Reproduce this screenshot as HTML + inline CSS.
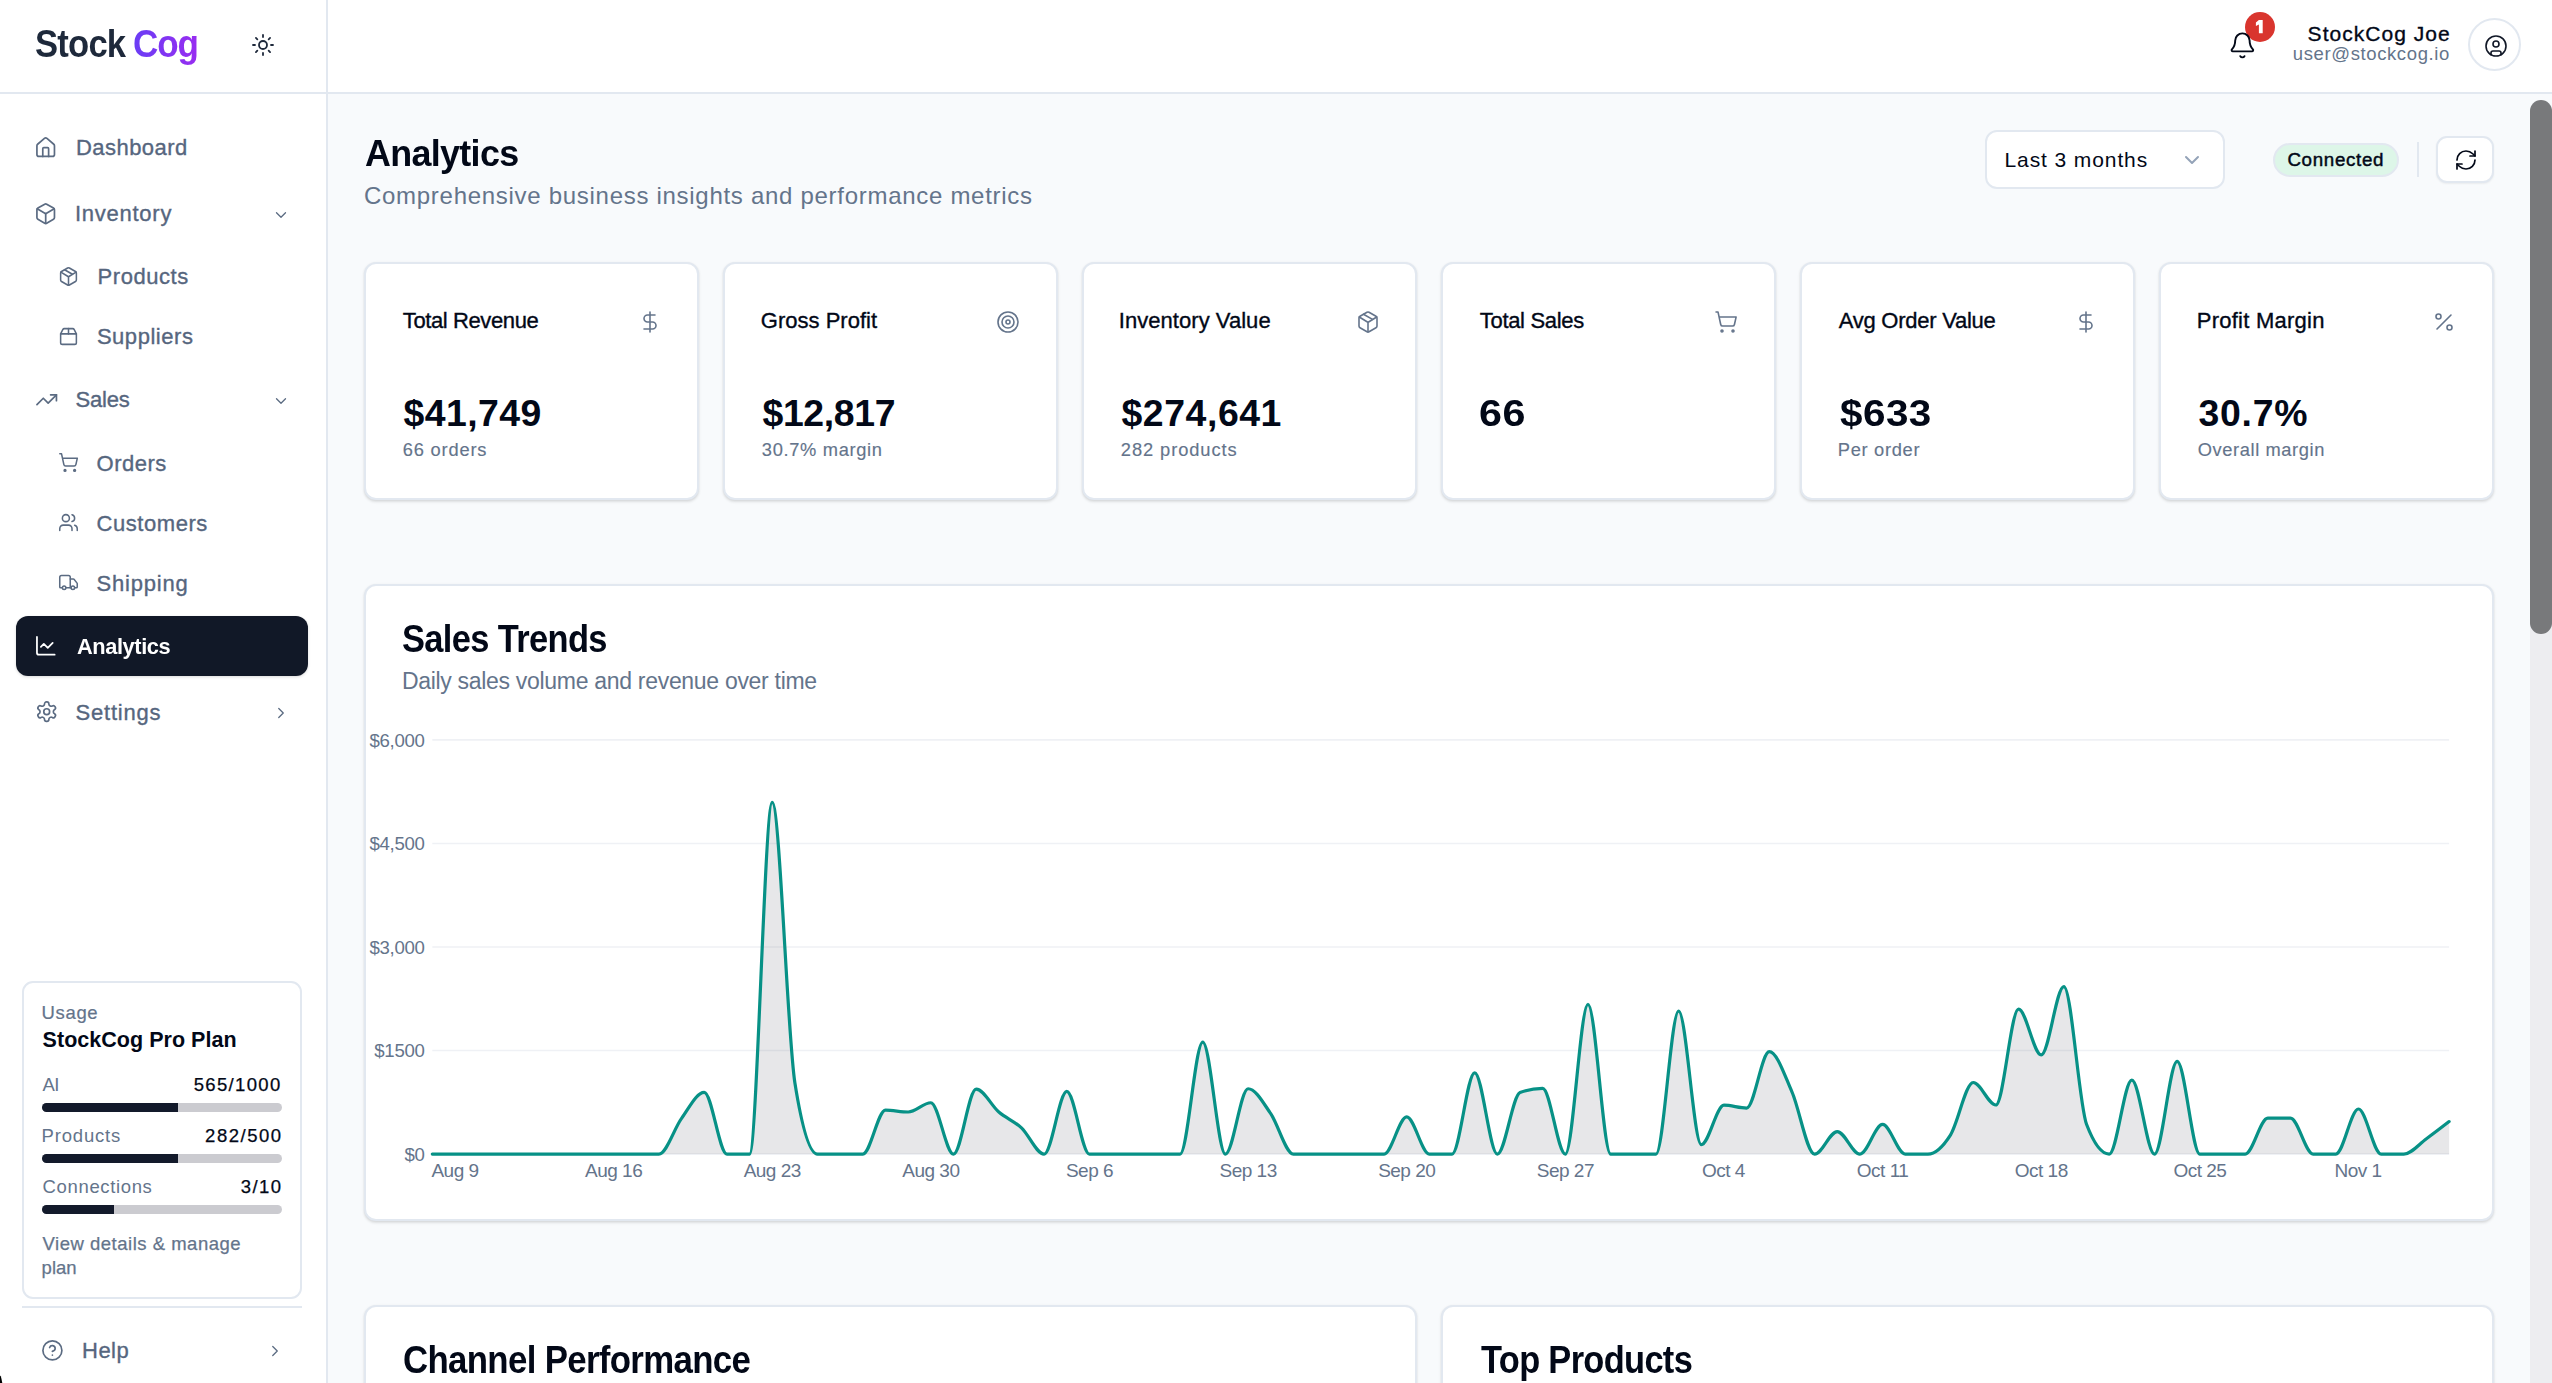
<!DOCTYPE html>
<html><head><meta charset="utf-8"><title>StockCog Analytics</title>
<style>
*{box-sizing:border-box;margin:0;padding:0}
html,body{width:2552px;height:1383px;overflow:hidden;background:#f8fafc;font-family:"Liberation Sans",sans-serif}
.t{position:absolute;white-space:nowrap}
.ic{position:absolute;overflow:visible}
.abs{position:absolute}
.card{position:absolute;background:#fff;border:2px solid #e2e8f0;border-radius:12px;box-shadow:0 1.5px 3px rgba(0,0,0,0.10),0 1px 2px rgba(0,0,0,0.05)}
.bar{position:absolute;left:42px;width:240px;height:9px;border-radius:5px;background:#cbcbd0;overflow:hidden}
.bar i{position:absolute;left:0;top:0;bottom:0;background:#131a2b}
</style></head><body>
<div class="abs" style="left:0;top:0;width:326px;height:1383px;background:#fff"></div>
<div class="abs" style="left:326px;top:0;width:2px;height:1383px;background:#e2e8f0"></div>
<div class="abs" style="left:328px;top:0;width:2224px;height:92px;background:#fff"></div>
<div class="abs" style="left:0;top:92px;width:2552px;height:2px;background:#e2e8f0"></div>
<div class="abs" style="left:16px;top:616px;width:292px;height:60px;border-radius:12px;background:#111827;box-shadow:0 1px 3px rgba(0,0,0,0.15)"></div>
<div class="abs" style="left:22px;top:981px;width:280px;height:318px;border:2px solid #e2e8f0;border-radius:11px;background:#fff"></div>
<div class="bar" style="top:1103px"><i style="width:136px"></i></div>
<div class="bar" style="top:1154px"><i style="width:136px"></i></div>
<div class="bar" style="top:1205px"><i style="width:72px"></i></div>
<div class="abs" style="left:22px;top:1306px;width:280px;height:2px;background:#e2e8f0"></div>
<div class="abs" style="left:2245px;top:12px;width:30px;height:30px;border-radius:50%;background:#d9352e"></div><svg class="abs" style="left:0;top:0" width="2552" height="60"><polygon points="2258.9,20 2262.7,20 2262.7,33.3 2258.9,33.3 2258.9,24.6 2255.9,25.9 2255.9,22.6" fill="#fff"/></svg>
<div class="abs" style="left:2468px;top:18px;width:53px;height:53px;border-radius:50%;border:2px solid #e2e8f0;background:#fff"></div>
<div class="abs" style="left:1985px;top:130px;width:240px;height:59px;border:2px solid #e2e8f0;border-radius:12px;background:#fff"></div>
<div class="abs" style="left:2273px;top:143px;width:126px;height:34px;border:2px solid #e2e8f0;border-radius:17px;background:#ddf6e8"></div>
<div class="abs" style="left:2417px;top:142px;width:2px;height:35px;background:#e2e8f0"></div>
<div class="abs" style="left:2436px;top:136px;width:58px;height:47px;border:2px solid #e2e8f0;border-radius:11px;background:#fff;box-shadow:0 1px 2px rgba(0,0,0,0.06)"></div>
<div class="card" style="left:364px;top:262px;width:335px;height:238px"></div><div class="card" style="left:723px;top:262px;width:335px;height:238px"></div><div class="card" style="left:1082px;top:262px;width:335px;height:238px"></div><div class="card" style="left:1441px;top:262px;width:335px;height:238px"></div><div class="card" style="left:1800px;top:262px;width:335px;height:238px"></div><div class="card" style="left:2159px;top:262px;width:335px;height:238px"></div>
<div class="card" style="left:364px;top:584px;width:2130px;height:637px"></div>
<div class="card" style="left:364px;top:1305px;width:1053px;height:200px"></div>
<div class="card" style="left:1441px;top:1305px;width:1053px;height:200px"></div>
<svg class="abs" style="left:0;top:0" width="2552" height="1383" viewBox="0 0 2552 1383">
<g stroke="#eff1f5" stroke-width="1.6"><line x1="432.3" x2="2449.1" y1="739.9" y2="739.9"/><line x1="432.3" x2="2449.1" y1="843.45" y2="843.45"/><line x1="432.3" x2="2449.1" y1="947.0" y2="947.0"/><line x1="432.3" x2="2449.1" y1="1050.55" y2="1050.55"/><line x1="432.3" x2="2449.1" y1="1154.1" y2="1154.1"/></g>
<path d="M432.30,1154.10C439.85,1154.10,447.41,1154.10,454.96,1154.10C462.51,1154.10,470.07,1154.10,477.62,1154.10C485.17,1154.10,492.73,1154.10,500.28,1154.10C507.84,1154.10,515.39,1154.10,522.94,1154.10C530.50,1154.10,538.05,1154.10,545.60,1154.10C553.16,1154.10,560.71,1154.10,568.26,1154.10C575.82,1154.10,583.37,1154.10,590.92,1154.10C598.48,1154.10,606.03,1154.10,613.59,1154.10C621.14,1154.10,628.69,1154.10,636.25,1154.10C643.80,1154.10,651.35,1154.10,658.91,1154.10C666.46,1154.10,674.01,1128.64,681.57,1118.34C689.12,1108.04,696.67,1092.32,704.23,1092.32C711.78,1092.32,719.34,1154.10,726.89,1154.10C734.44,1154.10,742.00,1154.10,749.55,1154.10C757.10,1154.10,764.66,802.44,772.21,802.44C779.76,802.44,787.32,1035.13,794.87,1082.72C802.42,1130.31,809.98,1154.10,817.53,1154.10C825.09,1154.10,832.64,1154.10,840.19,1154.10C847.75,1154.10,855.30,1154.10,862.85,1154.10C870.41,1154.10,877.96,1110.13,885.51,1110.13C893.07,1110.13,900.62,1111.99,908.17,1111.99C915.73,1111.99,923.28,1102.74,930.83,1102.74C938.39,1102.74,945.94,1154.10,953.50,1154.10C961.05,1154.10,968.60,1089.14,976.16,1089.14C983.71,1089.14,991.26,1105.54,998.82,1111.99C1006.37,1118.44,1013.92,1120.85,1021.48,1127.87C1029.03,1134.89,1036.58,1154.10,1044.14,1154.10C1051.69,1154.10,1059.25,1091.42,1066.80,1091.42C1074.35,1091.42,1081.91,1154.10,1089.46,1154.10C1097.01,1154.10,1104.57,1154.10,1112.12,1154.10C1119.67,1154.10,1127.23,1154.10,1134.78,1154.10C1142.33,1154.10,1149.89,1154.10,1157.44,1154.10C1165.00,1154.10,1172.55,1154.10,1180.10,1154.10C1187.66,1154.10,1195.21,1042.06,1202.76,1042.06C1210.32,1042.06,1217.87,1154.10,1225.42,1154.10C1232.98,1154.10,1240.53,1088.73,1248.08,1088.73C1255.64,1088.73,1263.19,1102.75,1270.74,1113.65C1278.30,1124.54,1285.85,1154.10,1293.41,1154.10C1300.96,1154.10,1308.51,1154.10,1316.07,1154.10C1323.62,1154.10,1331.17,1154.10,1338.73,1154.10C1346.28,1154.10,1353.83,1154.10,1361.39,1154.10C1368.94,1154.10,1376.49,1154.10,1384.05,1154.10C1391.60,1154.10,1399.16,1116.89,1406.71,1116.89C1414.26,1116.89,1421.82,1154.10,1429.37,1154.10C1436.92,1154.10,1444.48,1154.10,1452.03,1154.10C1459.58,1154.10,1467.14,1072.78,1474.69,1072.78C1482.24,1072.78,1489.80,1154.10,1497.35,1154.10C1504.91,1154.10,1512.46,1095.33,1520.01,1092.52C1527.57,1089.71,1535.12,1088.31,1542.67,1088.31C1550.23,1088.31,1557.78,1154.10,1565.33,1154.10C1572.89,1154.10,1580.44,1004.44,1587.99,1004.44C1595.55,1004.44,1603.10,1154.10,1610.66,1154.10C1618.21,1154.10,1625.76,1154.10,1633.32,1154.10C1640.87,1154.10,1648.42,1154.10,1655.98,1154.10C1663.53,1154.10,1671.08,1011.20,1678.64,1011.20C1686.19,1011.20,1693.74,1144.64,1701.30,1144.64C1708.85,1144.64,1716.40,1105.22,1723.96,1105.22C1731.51,1105.22,1739.07,1108.05,1746.62,1108.05C1754.17,1108.05,1761.73,1051.65,1769.28,1051.65C1776.83,1051.65,1784.39,1074.76,1791.94,1091.83C1799.49,1108.91,1807.05,1154.10,1814.60,1154.10C1822.15,1154.10,1829.71,1131.53,1837.26,1131.53C1844.82,1131.53,1852.37,1154.10,1859.92,1154.10C1867.48,1154.10,1875.03,1124.42,1882.58,1124.42C1890.14,1124.42,1897.69,1154.10,1905.24,1154.10C1912.80,1154.10,1920.35,1154.10,1927.90,1154.10C1935.46,1154.10,1943.01,1146.70,1950.57,1134.77C1958.12,1122.84,1965.67,1082.51,1973.23,1082.51C1980.78,1082.51,1988.33,1105.02,1995.89,1105.02C2003.44,1105.02,2010.99,1009.13,2018.55,1009.13C2026.10,1009.13,2033.65,1054.90,2041.21,1054.90C2048.76,1054.90,2056.31,986.63,2063.87,986.63C2071.42,986.63,2078.98,1104.40,2086.53,1124.28C2094.08,1144.16,2101.64,1154.10,2109.19,1154.10C2116.74,1154.10,2124.30,1080.03,2131.85,1080.03C2139.40,1080.03,2146.96,1154.10,2154.51,1154.10C2162.06,1154.10,2169.62,1061.46,2177.17,1061.46C2184.73,1061.46,2192.28,1154.10,2199.83,1154.10C2207.39,1154.10,2214.94,1154.10,2222.49,1154.10C2230.05,1154.10,2237.60,1154.10,2245.15,1154.10C2252.71,1154.10,2260.26,1118.13,2267.81,1118.13C2275.37,1118.13,2282.92,1118.13,2290.48,1118.13C2298.03,1118.13,2305.58,1154.10,2313.14,1154.10C2320.69,1154.10,2328.24,1154.10,2335.80,1154.10C2343.35,1154.10,2350.90,1109.02,2358.46,1109.02C2366.01,1109.02,2373.56,1154.10,2381.12,1154.10C2388.67,1154.10,2396.23,1154.10,2403.78,1154.10C2411.33,1154.10,2418.89,1144.12,2426.44,1138.71C2433.99,1133.29,2441.55,1127.44,2449.10,1121.59L2449.10,1154.10L432.30,1154.10Z" fill="rgba(113,113,122,0.17)" stroke="none"/>
<path d="M432.30,1154.10C439.85,1154.10,447.41,1154.10,454.96,1154.10C462.51,1154.10,470.07,1154.10,477.62,1154.10C485.17,1154.10,492.73,1154.10,500.28,1154.10C507.84,1154.10,515.39,1154.10,522.94,1154.10C530.50,1154.10,538.05,1154.10,545.60,1154.10C553.16,1154.10,560.71,1154.10,568.26,1154.10C575.82,1154.10,583.37,1154.10,590.92,1154.10C598.48,1154.10,606.03,1154.10,613.59,1154.10C621.14,1154.10,628.69,1154.10,636.25,1154.10C643.80,1154.10,651.35,1154.10,658.91,1154.10C666.46,1154.10,674.01,1128.64,681.57,1118.34C689.12,1108.04,696.67,1092.32,704.23,1092.32C711.78,1092.32,719.34,1154.10,726.89,1154.10C734.44,1154.10,742.00,1154.10,749.55,1154.10C757.10,1154.10,764.66,802.44,772.21,802.44C779.76,802.44,787.32,1035.13,794.87,1082.72C802.42,1130.31,809.98,1154.10,817.53,1154.10C825.09,1154.10,832.64,1154.10,840.19,1154.10C847.75,1154.10,855.30,1154.10,862.85,1154.10C870.41,1154.10,877.96,1110.13,885.51,1110.13C893.07,1110.13,900.62,1111.99,908.17,1111.99C915.73,1111.99,923.28,1102.74,930.83,1102.74C938.39,1102.74,945.94,1154.10,953.50,1154.10C961.05,1154.10,968.60,1089.14,976.16,1089.14C983.71,1089.14,991.26,1105.54,998.82,1111.99C1006.37,1118.44,1013.92,1120.85,1021.48,1127.87C1029.03,1134.89,1036.58,1154.10,1044.14,1154.10C1051.69,1154.10,1059.25,1091.42,1066.80,1091.42C1074.35,1091.42,1081.91,1154.10,1089.46,1154.10C1097.01,1154.10,1104.57,1154.10,1112.12,1154.10C1119.67,1154.10,1127.23,1154.10,1134.78,1154.10C1142.33,1154.10,1149.89,1154.10,1157.44,1154.10C1165.00,1154.10,1172.55,1154.10,1180.10,1154.10C1187.66,1154.10,1195.21,1042.06,1202.76,1042.06C1210.32,1042.06,1217.87,1154.10,1225.42,1154.10C1232.98,1154.10,1240.53,1088.73,1248.08,1088.73C1255.64,1088.73,1263.19,1102.75,1270.74,1113.65C1278.30,1124.54,1285.85,1154.10,1293.41,1154.10C1300.96,1154.10,1308.51,1154.10,1316.07,1154.10C1323.62,1154.10,1331.17,1154.10,1338.73,1154.10C1346.28,1154.10,1353.83,1154.10,1361.39,1154.10C1368.94,1154.10,1376.49,1154.10,1384.05,1154.10C1391.60,1154.10,1399.16,1116.89,1406.71,1116.89C1414.26,1116.89,1421.82,1154.10,1429.37,1154.10C1436.92,1154.10,1444.48,1154.10,1452.03,1154.10C1459.58,1154.10,1467.14,1072.78,1474.69,1072.78C1482.24,1072.78,1489.80,1154.10,1497.35,1154.10C1504.91,1154.10,1512.46,1095.33,1520.01,1092.52C1527.57,1089.71,1535.12,1088.31,1542.67,1088.31C1550.23,1088.31,1557.78,1154.10,1565.33,1154.10C1572.89,1154.10,1580.44,1004.44,1587.99,1004.44C1595.55,1004.44,1603.10,1154.10,1610.66,1154.10C1618.21,1154.10,1625.76,1154.10,1633.32,1154.10C1640.87,1154.10,1648.42,1154.10,1655.98,1154.10C1663.53,1154.10,1671.08,1011.20,1678.64,1011.20C1686.19,1011.20,1693.74,1144.64,1701.30,1144.64C1708.85,1144.64,1716.40,1105.22,1723.96,1105.22C1731.51,1105.22,1739.07,1108.05,1746.62,1108.05C1754.17,1108.05,1761.73,1051.65,1769.28,1051.65C1776.83,1051.65,1784.39,1074.76,1791.94,1091.83C1799.49,1108.91,1807.05,1154.10,1814.60,1154.10C1822.15,1154.10,1829.71,1131.53,1837.26,1131.53C1844.82,1131.53,1852.37,1154.10,1859.92,1154.10C1867.48,1154.10,1875.03,1124.42,1882.58,1124.42C1890.14,1124.42,1897.69,1154.10,1905.24,1154.10C1912.80,1154.10,1920.35,1154.10,1927.90,1154.10C1935.46,1154.10,1943.01,1146.70,1950.57,1134.77C1958.12,1122.84,1965.67,1082.51,1973.23,1082.51C1980.78,1082.51,1988.33,1105.02,1995.89,1105.02C2003.44,1105.02,2010.99,1009.13,2018.55,1009.13C2026.10,1009.13,2033.65,1054.90,2041.21,1054.90C2048.76,1054.90,2056.31,986.63,2063.87,986.63C2071.42,986.63,2078.98,1104.40,2086.53,1124.28C2094.08,1144.16,2101.64,1154.10,2109.19,1154.10C2116.74,1154.10,2124.30,1080.03,2131.85,1080.03C2139.40,1080.03,2146.96,1154.10,2154.51,1154.10C2162.06,1154.10,2169.62,1061.46,2177.17,1061.46C2184.73,1061.46,2192.28,1154.10,2199.83,1154.10C2207.39,1154.10,2214.94,1154.10,2222.49,1154.10C2230.05,1154.10,2237.60,1154.10,2245.15,1154.10C2252.71,1154.10,2260.26,1118.13,2267.81,1118.13C2275.37,1118.13,2282.92,1118.13,2290.48,1118.13C2298.03,1118.13,2305.58,1154.10,2313.14,1154.10C2320.69,1154.10,2328.24,1154.10,2335.80,1154.10C2343.35,1154.10,2350.90,1109.02,2358.46,1109.02C2366.01,1109.02,2373.56,1154.10,2381.12,1154.10C2388.67,1154.10,2396.23,1154.10,2403.78,1154.10C2411.33,1154.10,2418.89,1144.12,2426.44,1138.71C2433.99,1133.29,2441.55,1127.44,2449.10,1121.59" fill="none" stroke="#079186" stroke-width="3.2" stroke-linejoin="round" stroke-linecap="round"/>
</svg>
<div class="abs" style="left:2530px;top:110px;width:22px;height:1273px;background:#ededf0"></div>
<div class="abs" style="left:2530px;top:100px;width:22px;height:534px;border-radius:11px;background:#78797b"></div>
<svg class="ic" style="left:251.00px;top:33.00px;width:24px;height:24px" viewBox="0 0 24 24" fill="none" stroke="#1e293b" stroke-width="1.8" stroke-linecap="round" stroke-linejoin="round"><circle cx="12" cy="12" r="4"/><path d="M12 2v2"/><path d="M12 20v2"/><path d="m4.93 4.93 1.41 1.41"/><path d="m17.66 17.66 1.41 1.41"/><path d="M2 12h2"/><path d="M20 12h2"/><path d="m6.34 17.66-1.41 1.41"/><path d="m19.07 4.93-1.41 1.41"/></svg><svg class="ic" style="left:34.30px;top:135.80px;width:23.4px;height:23.4px" viewBox="0 0 24 24" fill="none" stroke="#5b6b82" stroke-width="1.75" stroke-linecap="round" stroke-linejoin="round"><path d="M15 21v-8a1 1 0 0 0-1-1h-4a1 1 0 0 0-1 1v8"/><path d="M3 10a2 2 0 0 1 .709-1.528l7-5.999a2 2 0 0 1 2.582 0l7 5.999A2 2 0 0 1 21 10v9a2 2 0 0 1-2 2H5a2 2 0 0 1-2-2z"/></svg><svg class="ic" style="left:34.30px;top:202.30px;width:23.4px;height:23.4px" viewBox="0 0 24 24" fill="none" stroke="#5b6b82" stroke-width="1.75" stroke-linecap="round" stroke-linejoin="round"><path d="M21 8a2 2 0 0 0-1-1.73l-7-4a2 2 0 0 0-2 0l-7 4A2 2 0 0 0 3 8v8a2 2 0 0 0 1 1.73l7 4a2 2 0 0 0 2 0l7-4A2 2 0 0 0 21 16Z"/><path d="m3.3 7 8.7 5 8.7-5"/><path d="M12 22V12"/></svg><svg class="ic" style="left:272.00px;top:205.90px;width:18px;height:18px" viewBox="0 0 24 24" fill="none" stroke="#5b6b82" stroke-width="1.75" stroke-linecap="round" stroke-linejoin="round"><path d="m6 9 6 6 6-6"/></svg><svg class="ic" style="left:58.00px;top:265.90px;width:21px;height:21px" viewBox="0 0 24 24" fill="none" stroke="#5b6b82" stroke-width="1.75" stroke-linecap="round" stroke-linejoin="round"><path d="M11 21.73a2 2 0 0 0 2 0l7-4A2 2 0 0 0 21 16V8a2 2 0 0 0-1-1.73l-7-4a2 2 0 0 0-2 0l-7 4A2 2 0 0 0 3 8v8a2 2 0 0 0 1 1.73z"/><path d="M12 22V12"/><path d="m3.3 7 7.703 4.734a2 2 0 0 0 1.994 0L20.7 7"/><path d="m7.5 4.27 9 5.15"/></svg><svg class="ic" style="left:58.10px;top:325.90px;width:21px;height:21px" viewBox="0 0 24 24" fill="none" stroke="#5b6b82" stroke-width="1.75" stroke-linecap="round" stroke-linejoin="round"><path d="M3 9h18v10a2 2 0 0 1-2 2H5a2 2 0 0 1-2-2V9Z"/><path d="m3 9 2.45-4.9A2 2 0 0 1 7.24 3h9.52a2 2 0 0 1 1.8 1.1L21 9"/><path d="M12 3v6"/></svg><svg class="ic" style="left:34.50px;top:388.00px;width:23.4px;height:23.4px" viewBox="0 0 24 24" fill="none" stroke="#5b6b82" stroke-width="1.75" stroke-linecap="round" stroke-linejoin="round"><polyline points="22 7 13.5 15.5 8.5 10.5 2 17"/><polyline points="16 7 22 7 22 13"/></svg><svg class="ic" style="left:272.00px;top:391.90px;width:18px;height:18px" viewBox="0 0 24 24" fill="none" stroke="#5b6b82" stroke-width="1.75" stroke-linecap="round" stroke-linejoin="round"><path d="m6 9 6 6 6-6"/></svg><svg class="ic" style="left:57.90px;top:451.70px;width:21px;height:21px" viewBox="0 0 24 24" fill="none" stroke="#5b6b82" stroke-width="1.75" stroke-linecap="round" stroke-linejoin="round"><circle cx="8" cy="21" r="1"/><circle cx="19" cy="21" r="1"/><path d="M2.05 2.05h2l2.66 12.42a2 2 0 0 0 2 1.58h9.78a2 2 0 0 0 1.95-1.57l1.65-7.43H5.12"/></svg><svg class="ic" style="left:58.00px;top:511.80px;width:21px;height:21px" viewBox="0 0 24 24" fill="none" stroke="#5b6b82" stroke-width="1.75" stroke-linecap="round" stroke-linejoin="round"><path d="M16 21v-2a4 4 0 0 0-4-4H6a4 4 0 0 0-4 4v2"/><circle cx="9" cy="7" r="4"/><path d="M22 21v-2a4 4 0 0 0-3-3.87"/><path d="M16 3.13a4 4 0 0 1 0 7.75"/></svg><svg class="ic" style="left:57.80px;top:571.90px;width:21px;height:21px" viewBox="0 0 24 24" fill="none" stroke="#5b6b82" stroke-width="1.75" stroke-linecap="round" stroke-linejoin="round"><path d="M14 18V6a2 2 0 0 0-2-2H4a2 2 0 0 0-2 2v11a1 1 0 0 0 1 1h2"/><path d="M15 18H9"/><path d="M19 18h2a1 1 0 0 0 1-1v-3.65a1 1 0 0 0-.22-.624l-3.48-4.35A1 1 0 0 0 17.52 8H14"/><circle cx="17" cy="18" r="2"/><circle cx="7" cy="18" r="2"/></svg><svg class="ic" style="left:34.20px;top:634.10px;width:23.6px;height:23.6px" viewBox="0 0 24 24" fill="none" stroke="#ffffff" stroke-width="1.8" stroke-linecap="round" stroke-linejoin="round"><path d="M3 3v16a2 2 0 0 0 2 2h16"/><path d="m19 9-5 5-4-4-3 3"/></svg><svg class="ic" style="left:34.70px;top:700.20px;width:23.4px;height:23.4px" viewBox="0 0 24 24" fill="none" stroke="#5b6b82" stroke-width="1.7" stroke-linecap="round" stroke-linejoin="round"><path d="M12.22 2h-.44a2 2 0 0 0-2 2v.18a2 2 0 0 1-1 1.73l-.43.25a2 2 0 0 1-2 0l-.15-.08a2 2 0 0 0-2.73.73l-.22.38a2 2 0 0 0 .73 2.73l.15.1a2 2 0 0 1 1 1.72v.51a2 2 0 0 1-1 1.74l-.15.09a2 2 0 0 0-.73 2.73l.22.38a2 2 0 0 0 2.73.73l.15-.08a2 2 0 0 1 2 0l.43.25a2 2 0 0 1 1 1.73V20a2 2 0 0 0 2 2h.44a2 2 0 0 0 2-2v-.18a2 2 0 0 1 1-1.73l.43-.25a2 2 0 0 1 2 0l.15.08a2 2 0 0 0 2.73-.73l.22-.39a2 2 0 0 0-.73-2.73l-.15-.08a2 2 0 0 1-1-1.74v-.5a2 2 0 0 1 1-1.74l.15-.09a2 2 0 0 0 .73-2.73l-.22-.38a2 2 0 0 0-2.73-.73l-.15.08a2 2 0 0 1-2 0l-.43-.25a2 2 0 0 1-1-1.73V4a2 2 0 0 0-2-2z"/><circle cx="12" cy="12" r="3"/></svg><svg class="ic" style="left:271.80px;top:703.90px;width:18px;height:18px" viewBox="0 0 24 24" fill="none" stroke="#5b6b82" stroke-width="1.75" stroke-linecap="round" stroke-linejoin="round"><path d="m9 18 6-6-6-6"/></svg><svg class="ic" style="left:40.60px;top:1338.60px;width:22.8px;height:22.8px" viewBox="0 0 24 24" fill="none" stroke="#5b6b82" stroke-width="1.75" stroke-linecap="round" stroke-linejoin="round"><circle cx="12" cy="12" r="10"/><path d="M9.09 9a3 3 0 0 1 5.83 1c0 2-3 3-3 3"/><path d="M12 17h.01"/></svg><svg class="ic" style="left:266.00px;top:1341.90px;width:18px;height:18px" viewBox="0 0 24 24" fill="none" stroke="#5b6b82" stroke-width="1.75" stroke-linecap="round" stroke-linejoin="round"><path d="m9 18 6-6-6-6"/></svg><svg class="ic" style="left:2228.20px;top:30.60px;width:28.8px;height:28.8px" viewBox="0 0 24 24" fill="none" stroke="#020817" stroke-width="1.6" stroke-linecap="round" stroke-linejoin="round"><path d="M10.268 21a2 2 0 0 0 3.464 0"/><path d="M3.262 15.326A1 1 0 0 0 4 17h16a1 1 0 0 0 .74-1.673C19.41 13.956 18 12.499 18 8A6 6 0 0 0 6 8c0 4.499-1.411 5.956-2.738 7.326"/></svg><svg class="ic" style="left:2484.00px;top:34.00px;width:24px;height:24px" viewBox="0 0 24 24" fill="none" stroke="#111827" stroke-width="1.6" stroke-linecap="round" stroke-linejoin="round"><circle cx="12" cy="12" r="10"/><circle cx="12" cy="10" r="3"/><path d="M7 20.662V19a2 2 0 0 1 2-2h6a2 2 0 0 1 2 2v1.662"/></svg><svg class="ic" style="left:2454.00px;top:148.00px;width:24px;height:24px" viewBox="0 0 24 24" fill="none" stroke="#020817" stroke-width="1.7" stroke-linecap="round" stroke-linejoin="round"><path d="M3 12a9 9 0 0 1 9-9 9.75 9.75 0 0 1 6.74 2.74L21 8"/><path d="M21 3v5h-5"/><path d="M21 12a9 9 0 0 1-9 9 9.75 9.75 0 0 1-6.74-2.74L3 16"/><path d="M8 16H3v5"/></svg><svg class="ic" style="left:2180.00px;top:148.00px;width:24px;height:24px" viewBox="0 0 24 24" fill="none" stroke="#94a3b8" stroke-width="2" stroke-linecap="round" stroke-linejoin="round"><path d="m6 9 6 6 6-6"/></svg><svg class="ic" style="left:638.00px;top:310.00px;width:24px;height:24px" viewBox="0 0 24 24" fill="none" stroke="#64748b" stroke-width="1.6" stroke-linecap="round" stroke-linejoin="round"><line x1="12" x2="12" y1="2" y2="22"/><path d="M17 5H9.5a3.5 3.5 0 0 0 0 7h5a3.5 3.5 0 0 1 0 7H6"/></svg><svg class="ic" style="left:996.00px;top:310.00px;width:24px;height:24px" viewBox="0 0 24 24" fill="none" stroke="#64748b" stroke-width="1.6" stroke-linecap="round" stroke-linejoin="round"><circle cx="12" cy="12" r="10"/><circle cx="12" cy="12" r="6"/><circle cx="12" cy="12" r="2"/></svg><svg class="ic" style="left:1356.00px;top:310.00px;width:24px;height:24px" viewBox="0 0 24 24" fill="none" stroke="#64748b" stroke-width="1.6" stroke-linecap="round" stroke-linejoin="round"><path d="M11 21.73a2 2 0 0 0 2 0l7-4A2 2 0 0 0 21 16V8a2 2 0 0 0-1-1.73l-7-4a2 2 0 0 0-2 0l-7 4A2 2 0 0 0 3 8v8a2 2 0 0 0 1 1.73z"/><path d="M12 22V12"/><path d="m3.3 7 7.703 4.734a2 2 0 0 0 1.994 0L20.7 7"/><path d="m7.5 4.27 9 5.15"/></svg><svg class="ic" style="left:1714.00px;top:310.00px;width:24px;height:24px" viewBox="0 0 24 24" fill="none" stroke="#64748b" stroke-width="1.6" stroke-linecap="round" stroke-linejoin="round"><circle cx="8" cy="21" r="1"/><circle cx="19" cy="21" r="1"/><path d="M2.05 2.05h2l2.66 12.42a2 2 0 0 0 2 1.58h9.78a2 2 0 0 0 1.95-1.57l1.65-7.43H5.12"/></svg><svg class="ic" style="left:2074.00px;top:310.00px;width:24px;height:24px" viewBox="0 0 24 24" fill="none" stroke="#64748b" stroke-width="1.6" stroke-linecap="round" stroke-linejoin="round"><line x1="12" x2="12" y1="2" y2="22"/><path d="M17 5H9.5a3.5 3.5 0 0 0 0 7h5a3.5 3.5 0 0 1 0 7H6"/></svg><svg class="ic" style="left:2432.00px;top:310.00px;width:24px;height:24px" viewBox="0 0 24 24" fill="none" stroke="#64748b" stroke-width="1.6" stroke-linecap="round" stroke-linejoin="round"><line x1="19" x2="5" y1="5" y2="19"/><circle cx="6.5" cy="6.5" r="2.5"/><circle cx="17.5" cy="17.5" r="2.5"/></svg>
<svg class="abs" style="left:0;top:1370px" width="10" height="13"><polygon points="0,5.5 0.9,6.5 1.6,9.5 2.3,13 0,13" fill="#000"/></svg>
<div class="t" style="left:35.09px;top:23.31px;font-size:38px;line-height:42.453px;font-weight:700;color:#1e293b;letter-spacing:-0.874px;transform:scaleX(0.9114);transform-origin:0 0;">Stock</div>
<div class="t" style="left:133.08px;top:23.31px;font-size:38px;line-height:42.453px;font-weight:700;color:transparent;letter-spacing:-1.195px;transform:scaleX(0.9229);transform-origin:0 0;background:linear-gradient(90deg,#6a3df5 0%,#9d2bf0 100%);-webkit-background-clip:text;background-clip:text;color:transparent;padding-right:8px;">Cog</div>
<div class="t" style="left:76.00px;top:136.11px;font-size:22px;line-height:24.578px;font-weight:400;color:#56667e;letter-spacing:0.451px;-webkit-text-stroke:0.35px #56667e;">Dashboard</div>
<div class="t" style="left:75.00px;top:201.92px;font-size:22px;line-height:24.578px;font-weight:400;color:#56667e;letter-spacing:0.738px;-webkit-text-stroke:0.35px #56667e;">Inventory</div>
<div class="t" style="left:75.60px;top:387.81px;font-size:22px;line-height:24.578px;font-weight:400;color:#56667e;letter-spacing:-0.233px;-webkit-text-stroke:0.35px #56667e;">Sales</div>
<div class="t" style="left:75.60px;top:700.51px;font-size:22px;line-height:24.578px;font-weight:400;color:#56667e;letter-spacing:0.773px;-webkit-text-stroke:0.35px #56667e;">Settings</div>
<div class="t" style="left:76.60px;top:634.51px;font-size:22px;line-height:24.578px;font-weight:700;color:#ffffff;letter-spacing:-0.412px;transform:scaleX(0.9906);transform-origin:0 0;">Analytics</div>
<div class="t" style="left:97.50px;top:265.11px;font-size:22px;line-height:24.578px;font-weight:400;color:#56667e;letter-spacing:0.569px;-webkit-text-stroke:0.35px #56667e;">Products</div>
<div class="t" style="left:96.90px;top:324.72px;font-size:22px;line-height:24.578px;font-weight:400;color:#56667e;letter-spacing:0.535px;-webkit-text-stroke:0.35px #56667e;">Suppliers</div>
<div class="t" style="left:96.50px;top:451.51px;font-size:22px;line-height:24.578px;font-weight:400;color:#56667e;letter-spacing:0.513px;-webkit-text-stroke:0.35px #56667e;">Orders</div>
<div class="t" style="left:96.50px;top:511.61px;font-size:22px;line-height:24.578px;font-weight:400;color:#56667e;letter-spacing:0.555px;-webkit-text-stroke:0.35px #56667e;">Customers</div>
<div class="t" style="left:96.50px;top:571.51px;font-size:22px;line-height:24.578px;font-weight:400;color:#56667e;letter-spacing:0.801px;-webkit-text-stroke:0.35px #56667e;">Shipping</div>
<div class="t" style="left:82.00px;top:1338.61px;font-size:22px;line-height:24.578px;font-weight:400;color:#56667e;letter-spacing:0.496px;-webkit-text-stroke:0.35px #56667e;">Help</div>
<div class="t" style="left:41.60px;top:1003.11px;font-size:18.5px;line-height:20.668px;font-weight:400;color:#64748b;letter-spacing:0.628px;-webkit-text-stroke:0.2px #64748b;">Usage</div>
<div class="t" style="left:42.60px;top:1027.70px;font-size:21.5px;line-height:24.020px;font-weight:700;color:#020817;letter-spacing:0.025px;">StockCog Pro Plan</div>
<div class="t" style="left:42.60px;top:1074.81px;font-size:18.5px;line-height:20.668px;font-weight:400;color:#64748b;letter-spacing:-0.739px;">AI</div>
<div class="t" style="left:193.70px;top:1074.81px;font-size:18.5px;line-height:20.668px;font-weight:400;color:#020817;letter-spacing:1.347px;-webkit-text-stroke:0.25px #020817;">565/1000</div>
<div class="t" style="left:41.60px;top:1126.21px;font-size:18.5px;line-height:20.668px;font-weight:400;color:#64748b;letter-spacing:0.806px;">Products</div>
<div class="t" style="left:205.10px;top:1126.21px;font-size:18.5px;line-height:20.668px;font-weight:400;color:#020817;letter-spacing:1.519px;-webkit-text-stroke:0.25px #020817;">282/500</div>
<div class="t" style="left:42.60px;top:1177.21px;font-size:18.5px;line-height:20.668px;font-weight:400;color:#64748b;letter-spacing:0.641px;">Connections</div>
<div class="t" style="left:240.70px;top:1177.21px;font-size:18.5px;line-height:20.668px;font-weight:400;color:#020817;letter-spacing:1.461px;-webkit-text-stroke:0.25px #020817;">3/10</div>
<div class="t" style="left:42.60px;top:1233.81px;font-size:18.5px;line-height:20.668px;font-weight:400;color:#64748b;letter-spacing:0.507px;-webkit-text-stroke:0.25px #64748b;">View details &amp; manage</div>
<div class="t" style="left:41.60px;top:1257.61px;font-size:18.5px;line-height:20.668px;font-weight:400;color:#64748b;-webkit-text-stroke:0.25px #64748b;">plan</div>
<div class="t" style="left:2307.60px;top:21.70px;font-size:21px;line-height:23.461px;font-weight:400;color:#020817;letter-spacing:1.031px;-webkit-text-stroke:0.35px #020817;">StockCog Joe</div>
<div class="t" style="left:2292.80px;top:44.31px;font-size:18.5px;line-height:20.668px;font-weight:400;color:#64748b;letter-spacing:0.612px;">user@stockcog.io</div>
<div class="t" style="left:365.00px;top:133.11px;font-size:37px;line-height:41.336px;font-weight:700;color:#020817;letter-spacing:-0.693px;transform:scaleX(0.9697);transform-origin:0 0;">Analytics</div>
<div class="t" style="left:364.00px;top:182.70px;font-size:24px;line-height:26.812px;font-weight:400;color:#64748b;letter-spacing:0.711px;">Comprehensive business insights and performance metrics</div>
<div class="t" style="left:2004.50px;top:147.61px;font-size:21px;line-height:23.461px;font-weight:400;color:#020817;letter-spacing:0.899px;">Last 3 months</div>
<div class="t" style="left:2287.40px;top:149.71px;font-size:18.75px;line-height:20.947px;font-weight:400;color:#020817;letter-spacing:0.667px;-webkit-text-stroke:0.45px #020817;">Connected</div>
<div class="t" style="left:402.80px;top:309.22px;font-size:22px;line-height:24.578px;font-weight:400;color:#020817;letter-spacing:-0.393px;-webkit-text-stroke:0.35px #020817;">Total Revenue</div>
<div class="t" style="left:403.50px;top:393.02px;font-size:37.4px;line-height:41.783px;font-weight:700;color:#020817;letter-spacing:0.440px;">$41,749</div>
<div class="t" style="left:402.80px;top:439.62px;font-size:18.3px;line-height:20.445px;font-weight:400;color:#64748b;letter-spacing:0.801px;-webkit-text-stroke:0.15px #64748b;">66 orders</div>
<div class="t" style="left:760.80px;top:309.22px;font-size:22px;line-height:24.578px;font-weight:400;color:#020817;letter-spacing:0.016px;-webkit-text-stroke:0.35px #020817;">Gross Profit</div>
<div class="t" style="left:762.50px;top:393.02px;font-size:37.4px;line-height:41.783px;font-weight:700;color:#020817;letter-spacing:-0.360px;">$12,817</div>
<div class="t" style="left:761.80px;top:439.62px;font-size:18.3px;line-height:20.445px;font-weight:400;color:#64748b;letter-spacing:0.670px;-webkit-text-stroke:0.15px #64748b;">30.7% margin</div>
<div class="t" style="left:1118.80px;top:309.22px;font-size:22px;line-height:24.578px;font-weight:400;color:#020817;letter-spacing:0.043px;-webkit-text-stroke:0.35px #020817;">Inventory Value</div>
<div class="t" style="left:1121.50px;top:393.02px;font-size:37.4px;line-height:41.783px;font-weight:700;color:#020817;letter-spacing:0.563px;">$274,641</div>
<div class="t" style="left:1120.80px;top:439.62px;font-size:18.3px;line-height:20.445px;font-weight:400;color:#64748b;letter-spacing:0.922px;-webkit-text-stroke:0.15px #64748b;">282 products</div>
<div class="t" style="left:1479.80px;top:309.22px;font-size:22px;line-height:24.578px;font-weight:400;color:#020817;letter-spacing:-0.322px;-webkit-text-stroke:0.35px #020817;">Total Sales</div>
<div class="t" style="left:1479.40px;top:393.02px;font-size:37.4px;line-height:41.783px;font-weight:700;color:#020817;letter-spacing:0.606px;transform:scaleX(1.1039);transform-origin:0 0;">66</div>
<div class="t" style="left:1838.80px;top:309.22px;font-size:22px;line-height:24.578px;font-weight:400;color:#020817;letter-spacing:-0.262px;-webkit-text-stroke:0.35px #020817;">Avg Order Value</div>
<div class="t" style="left:1839.50px;top:393.02px;font-size:37.4px;line-height:41.783px;font-weight:700;color:#020817;letter-spacing:0.418px;transform:scaleX(1.0820);transform-origin:0 0;">$633</div>
<div class="t" style="left:1837.80px;top:439.62px;font-size:18.3px;line-height:20.445px;font-weight:400;color:#64748b;letter-spacing:0.685px;-webkit-text-stroke:0.15px #64748b;">Per order</div>
<div class="t" style="left:2196.80px;top:309.22px;font-size:22px;line-height:24.578px;font-weight:400;color:#020817;letter-spacing:0.244px;-webkit-text-stroke:0.35px #020817;">Profit Margin</div>
<div class="t" style="left:2198.50px;top:393.02px;font-size:37.4px;line-height:41.783px;font-weight:700;color:#020817;letter-spacing:0.732px;">30.7%</div>
<div class="t" style="left:2197.80px;top:439.62px;font-size:18.3px;line-height:20.445px;font-weight:400;color:#64748b;letter-spacing:0.593px;-webkit-text-stroke:0.15px #64748b;">Overall margin</div>
<div class="t" style="left:402.01px;top:617.01px;font-size:38.5px;line-height:43.012px;font-weight:700;color:#020817;letter-spacing:-0.723px;transform:scaleX(0.8949);transform-origin:0 0;">Sales Trends</div>
<div class="t" style="left:401.90px;top:669.31px;font-size:23px;line-height:25.695px;font-weight:400;color:#64748b;letter-spacing:-0.302px;">Daily sales volume and revenue over time</div>
<div class="t" style="left:369.47px;top:730.61px;font-size:18.6px;line-height:20.780px;font-weight:400;color:#64748b;letter-spacing:-0.300px;">$6,000</div>
<div class="t" style="left:369.47px;top:834.20px;font-size:18.6px;line-height:20.780px;font-weight:400;color:#64748b;letter-spacing:-0.300px;">$4,500</div>
<div class="t" style="left:369.47px;top:937.81px;font-size:18.6px;line-height:20.780px;font-weight:400;color:#64748b;letter-spacing:-0.300px;">$3,000</div>
<div class="t" style="left:374.34px;top:1041.42px;font-size:18.6px;line-height:20.780px;font-weight:400;color:#64748b;letter-spacing:-0.300px;">$1500</div>
<div class="t" style="left:404.46px;top:1145.01px;font-size:18.6px;line-height:20.780px;font-weight:400;color:#64748b;letter-spacing:-0.300px;">$0</div>
<div class="t" style="left:431.42px;top:1159.71px;font-size:19.0px;line-height:21.227px;font-weight:400;color:#64748b;letter-spacing:-0.500px;">Aug 9</div>
<div class="t" style="left:585.01px;top:1159.71px;font-size:19.0px;line-height:21.227px;font-weight:400;color:#64748b;letter-spacing:-0.500px;">Aug 16</div>
<div class="t" style="left:743.63px;top:1159.71px;font-size:19.0px;line-height:21.227px;font-weight:400;color:#64748b;letter-spacing:-0.500px;">Aug 23</div>
<div class="t" style="left:902.26px;top:1159.71px;font-size:19.0px;line-height:21.227px;font-weight:400;color:#64748b;letter-spacing:-0.500px;">Aug 30</div>
<div class="t" style="left:1065.92px;top:1159.71px;font-size:19.0px;line-height:21.227px;font-weight:400;color:#64748b;letter-spacing:-0.500px;">Sep 6</div>
<div class="t" style="left:1219.51px;top:1159.71px;font-size:19.0px;line-height:21.227px;font-weight:400;color:#64748b;letter-spacing:-0.500px;">Sep 13</div>
<div class="t" style="left:1378.13px;top:1159.71px;font-size:19.0px;line-height:21.227px;font-weight:400;color:#64748b;letter-spacing:-0.500px;">Sep 20</div>
<div class="t" style="left:1536.76px;top:1159.71px;font-size:19.0px;line-height:21.227px;font-weight:400;color:#64748b;letter-spacing:-0.500px;">Sep 27</div>
<div class="t" style="left:1702.04px;top:1159.71px;font-size:19.0px;line-height:21.227px;font-weight:400;color:#64748b;letter-spacing:-0.500px;">Oct 4</div>
<div class="t" style="left:1856.84px;top:1159.71px;font-size:19.0px;line-height:21.227px;font-weight:400;color:#64748b;letter-spacing:-0.500px;">Oct 11</div>
<div class="t" style="left:2014.76px;top:1159.71px;font-size:19.0px;line-height:21.227px;font-weight:400;color:#64748b;letter-spacing:-0.500px;">Oct 18</div>
<div class="t" style="left:2173.38px;top:1159.71px;font-size:19.0px;line-height:21.227px;font-weight:400;color:#64748b;letter-spacing:-0.500px;">Oct 25</div>
<div class="t" style="left:2334.42px;top:1159.71px;font-size:19.0px;line-height:21.227px;font-weight:400;color:#64748b;letter-spacing:-0.500px;">Nov 1</div>
<div class="t" style="left:402.50px;top:1338.01px;font-size:38.5px;line-height:43.012px;font-weight:700;color:#020817;letter-spacing:-0.745px;transform:scaleX(0.9044);transform-origin:0 0;">Channel Performance</div>
<div class="t" style="left:1480.60px;top:1338.01px;font-size:38.5px;line-height:43.012px;font-weight:700;color:#020817;letter-spacing:-0.750px;transform:scaleX(0.8935);transform-origin:0 0;">Top Products</div>
<script>(function(){var w=window.innerWidth;if(w&&Math.abs(w-2552)>2){var k=w/2552;document.documentElement.style.overflow='hidden';document.body.style.transformOrigin='0 0';document.body.style.transform='scale('+k+')';}})();</script>
</body></html>
